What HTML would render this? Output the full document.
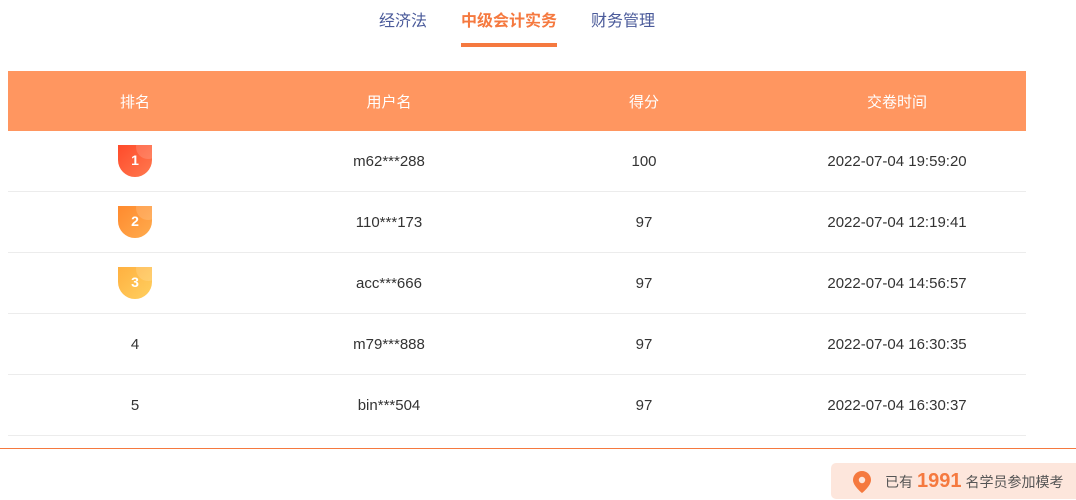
<!DOCTYPE html>
<html><head><meta charset="utf-8"><style>
*{margin:0;padding:0;box-sizing:border-box}
body{width:1076px;height:500px;background:#fff;font-family:"Liberation Sans","Noto Sans CJK SC",sans-serif;position:relative;overflow:hidden;color:#333}
.tab{position:absolute;top:11px;font-size:16px;line-height:22px;color:#4a5a9a}
.tab.on{color:#f5793f;font-weight:bold}
.ul{position:absolute;left:461px;top:43px;width:96px;height:4px;background:#f5793f}
.tbl{position:absolute;left:8px;top:71px;width:1018px}
.row{height:61px;display:flex;align-items:center;border-bottom:1px solid #ececec;font-size:15px;color:#333;position:relative}
.hd{height:60px;background:#ff9660;color:#fff;border:none;font-size:15px}
.c{position:absolute;transform:translateX(-50%);white-space:nowrap}
.b{display:inline-block;width:34px;height:32px;border-radius:0 0 17px 17px;color:#fff;font-weight:bold;font-size:14px;text-align:center;line-height:30px;position:relative;overflow:hidden}
.b::after{content:"";position:absolute;right:-8px;top:-10px;width:24px;height:24px;border-radius:50%;background:rgba(255,255,255,.15)}
.line{position:absolute;left:0;top:448px;width:1076px;height:1px;background:#f5793f}
.info{position:absolute;left:831px;top:463px;width:245px;height:36px;background:#fde6dc;border-radius:5px 0 0 5px;font-size:14px;color:#555;line-height:36px;padding-left:54px}
.info b{color:#f5793f;font-size:20px;margin:0 4px}
</style></head><body>
<div class="tab" style="left:379px">经济法</div>
<div class="tab on" style="left:461px">中级会计实务</div>
<div class="tab" style="left:591px">财务管理</div>
<div class="ul"></div>
<div class="tbl">
<div class="row hd"><span class="c" style="left:127px">排名</span><span class="c" style="left:381px">用户名</span><span class="c" style="left:636px">得分</span><span class="c" style="left:889px">交卷时间</span></div>
<div class="row"><span class="c" style="left:127px;top:14px"><span class="b" style="background:linear-gradient(135deg,#ff4a2a,#ff7a50)">1</span></span><span class="c" style="left:381px">m62***288</span><span class="c" style="left:636px">100</span><span class="c" style="left:889px">2022-07-04 19:59:20</span></div>
<div class="row"><span class="c" style="left:127px;top:14px"><span class="b" style="background:linear-gradient(135deg,#ff8a2e,#ffac4e)">2</span></span><span class="c" style="left:381px">110***173</span><span class="c" style="left:636px">97</span><span class="c" style="left:889px">2022-07-04 12:19:41</span></div>
<div class="row"><span class="c" style="left:127px;top:14px"><span class="b" style="background:linear-gradient(135deg,#ffb040,#ffd060)">3</span></span><span class="c" style="left:381px">acc***666</span><span class="c" style="left:636px">97</span><span class="c" style="left:889px">2022-07-04 14:56:57</span></div>
<div class="row"><span class="c" style="left:127px">4</span><span class="c" style="left:381px">m79***888</span><span class="c" style="left:636px">97</span><span class="c" style="left:889px">2022-07-04 16:30:35</span></div>
<div class="row"><span class="c" style="left:127px">5</span><span class="c" style="left:381px">bin***504</span><span class="c" style="left:636px">97</span><span class="c" style="left:889px">2022-07-04 16:30:37</span></div>
</div>
<div class="line"></div>
<div class="info"><svg style="position:absolute;left:22px;top:8px" width="18" height="22" viewBox="0 0 18 22"><path d="M9 0C4 0 0 4 0 9c0 6 9 13 9 13s9-7 9-13C18 4 14 0 9 0z" fill="#f5793f"/><circle cx="9" cy="9" r="3.2" fill="#fde6dc"/></svg>已有<b>1991</b>名学员参加模考</div>
</body></html>
